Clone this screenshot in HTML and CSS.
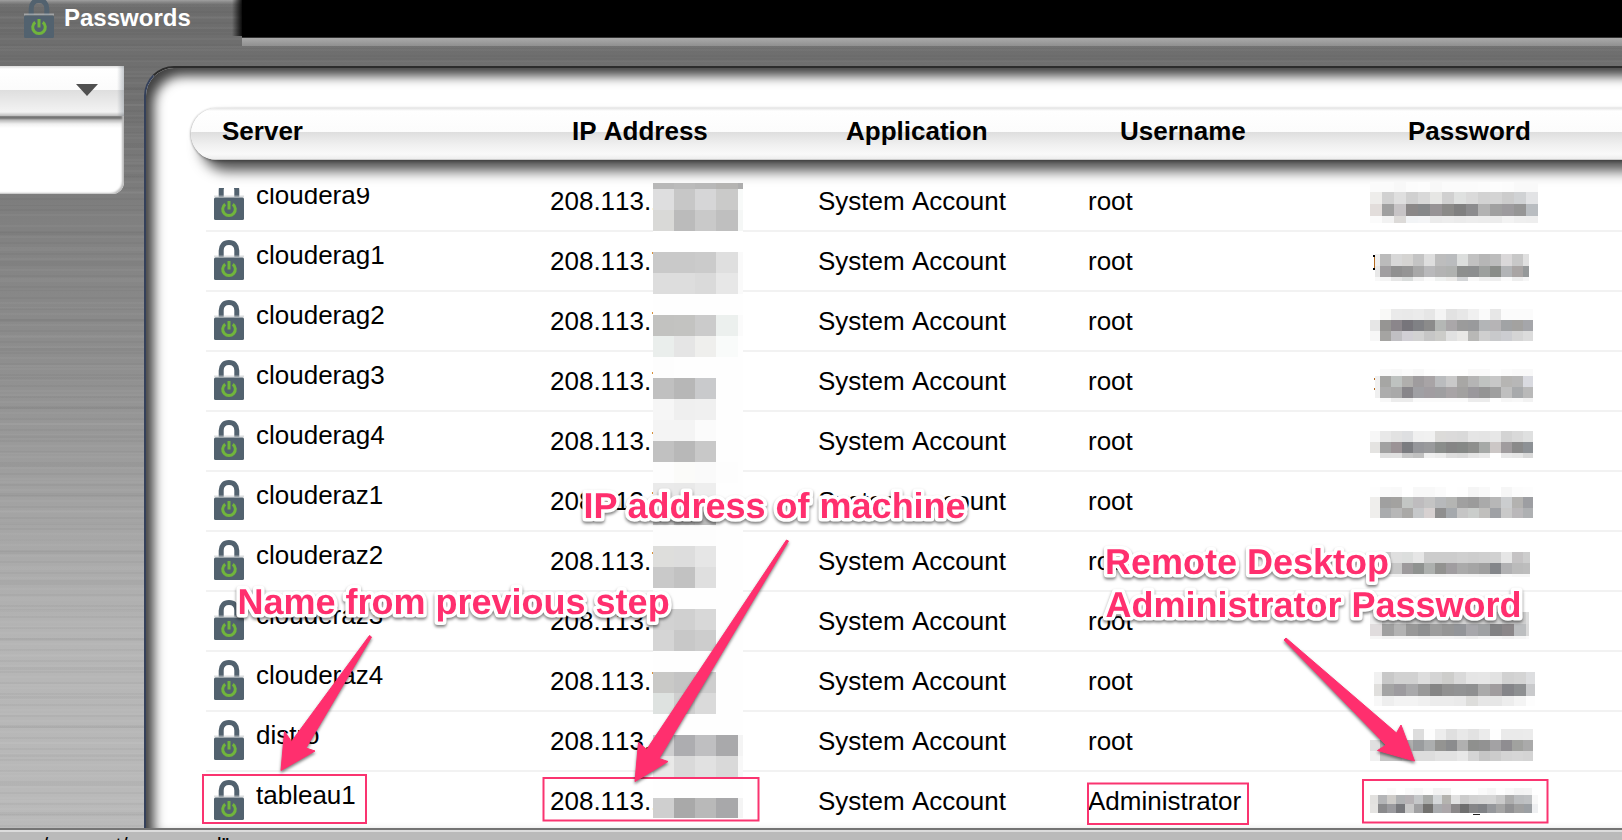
FILE: index.html
```html
<!DOCTYPE html>
<html lang="en">
<head>
<meta charset="utf-8">
<title>Passwords</title>
<link rel="stylesheet" href="styles.css">
</head>
<body>
<svg class="defs" width="0" height="0">
  <symbol id="lock" viewBox="0 0 30 40">
    <path d="M7.200 17V10.500C7.200 5.500 10 2.500 15 2.500S22.800 5.500 22.800 10.500V17" fill="none" stroke="#52626f" stroke-width="5"/>
    <rect x="0" y="15.500" width="30" height="2" fill="#c4c9cd" opacity=".6"/>
    <rect x="0" y="17.500" width="30" height="22.500" rx="1.500" fill="#52626f"/>
    <path d="M11.200 24.200A6.300 6.300 0 1 0 18.800 24.200" fill="none" stroke="#71b53c" stroke-width="3"/>
    <path d="M15 21V29.500" stroke="#71b53c" stroke-width="3"/>
  </symbol>
</svg>
<header class="topbar">
  <div class="tab"><svg class="lock"><use href="#lock"/></svg><span>Passwords</span></div>
  <div class="topfill"></div>
</header>
<main class="body">
  <aside class="side">
    <div class="select"><i class="caret"></i></div>
    <div class="sidebox"></div>
  </aside>
  <section class="panel">
    <div class="cols head">
      <span>Server</span><span>IP Address</span><span>Application</span><span>Username</span><span>Password</span>
    </div>
    <div class="rows" id="rows"></div>
  </section>
</main>
<footer class="status">/support/password”</footer>

<svg class="overlay" viewBox="0 0 1622 840" width="1622" height="840">
  <g id="mosaic" shape-rendering="crispEdges"></g>
  <g class="boxes">
    <rect x="203" y="775" width="163" height="48"/>
    <rect x="543.500" y="778" width="215" height="42.500"/>
    <rect x="1088" y="783.500" width="160" height="40.500"/>
    <rect x="1363" y="780" width="184.500" height="42.500"/>
  </g>
  <g class="arrows">
    <path d="M369.500 635.500L371.500 637L306 748L315 751L281 770.500L284.500 731.500L291.500 741.500Z"/>
    <path d="M786.500 540L788.500 541L659 758.500L668 761.500L635 781.500L638.500 742.500L646.700 749.500Z"/>
    <path d="M1284 640L1286 638L1396.500 733L1401 725L1414.500 761L1377.500 750.500L1386 745Z"/>
  </g>
  <g class="notes">
    <text x="583.500" y="518">IP address of machine</text>
    <text x="237.500" y="614">Name from previous step</text>
    <text x="1105" y="574">Remote Desktop</text>
    <text x="1105.500" y="617">Administrator Password</text>
  </g>
</svg>
<script src="app.js"></script>
</body>
</html>
```
FILE: styles.css
```css
* { box-sizing: border-box; }
body {
  margin: 0;
  width: 1622px;
  height: 840px;
  overflow: hidden;
  position: relative;
  display: flex;
  flex-direction: column;
  font: 26px/30px "Liberation Sans", Arial, sans-serif;
  font-kerning: none;
  color: #000;
  background:
    repeating-linear-gradient(rgba(0,0,0,.03) 0 2px, transparent 2px 5px, rgba(255,255,255,.03) 5px 7px, transparent 7px 11px),
    repeating-linear-gradient(rgba(0,0,0,.03) 0 3px, transparent 3px 17px, rgba(255,255,255,.03) 17px 19px, transparent 19px 29px),
    linear-gradient(#6c6c6c 0, #717171 100px, #808080 220px, #8e8e8e 360px, #a2a2a2 500px, #b5b5b5 640px, #bababa 830px);
}
.defs { position: absolute; }
.topbar { display: flex; height: 46px; flex: none; }
.tab {
  width: 242px;
  display: flex;
  overflow: hidden;
  padding-left: 24px;
  gap: 10px;
  color: #fff;
  font-weight: bold;
  font-size: 24px;
  line-height: 36px;
  background:
    linear-gradient(90deg, transparent 232px, rgba(0,0,0,.9) 242px) 0 0 / 100% 36px no-repeat,
    linear-gradient(#a0a0a0, transparent 5px);
}
.lock { width: 30px; height: 40px; flex: none; }
.tab .lock { margin-top: -2px; }
.topfill {
  flex: 1;
  background: linear-gradient(#000 0 37px, #333 37px 38px, #aaa 38px, #909090 46px);
}
.body { display: flex; flex: 1; min-height: 0; }
.side { width: 144px; padding-top: 20px; }
.select {
  width: 124px;
  height: 50px;
  display: flex;
  justify-content: flex-end;
  padding: 18px 26px 0 0;
  background:
    linear-gradient(90deg, transparent 117px, rgba(110,120,130,.4) 124px),
    linear-gradient(#ddd 0, #fff 3px, #fbfbfb 24px, #dedede 24px, #f3f3f3 46px, #bbb 50px);
}
.caret { width: 22px; height: 12px; background: #505050; clip-path: polygon(0 0, 100% 0, 50% 100%); }
.sidebox {
  width: 124px;
  height: 78px;
  border-radius: 0 0 12px 0;
  box-shadow: inset -2px -1px 2px #bbb;
  background: linear-gradient(#858585 0, #707070 2px, #b8b8b8 4px, #f0f0f0 8px, #fff 12px);
}
.panel {
  flex: 1;
  height: 762px;
  margin-top: 20px;
  margin-right: -30px;
  padding: 40px 0 0 45px;
  border-left: 2px solid #34405a;
  border-top: 2px solid #2c2c2c;
  border-radius: 30px 0 0 0;
  background: #fff;
  box-shadow: inset 8px 8px 12px rgba(0,0,0,.75);
}
.cols { display: grid; grid-template-columns: 336px 268px 270px 1fr; }
.head {
  height: 52px;
  grid-template-columns: 350px 274px 274px 288px 1fr;
  padding: 8px 0 0 31px;
  font-weight: bold;
  border-radius: 28px 0 0 28px;
  background: linear-gradient(#e4e4e4 0, #fff 3px, #fcfcfc 24px, #dedede 24px, #efefef 36px, #f9f9f9 46px, #eee 51px, #aaa 52px);
  box-shadow: 10px 11px 13px rgba(0,0,0,.68), -1px 0 2px rgba(0,0,0,.22), 1px 2px 3px rgba(0,0,0,.2);
}
.rows { margin: 28px 0 0 15px; height: 640px; overflow: hidden; display: flex; flex-direction: column; }
.row { flex: none; height: 60px; border-bottom: 2px solid #f2f2f2; padding: 7px 0 0 8px; }
.row:first-child { height: 44px; padding-top: 0; overflow: hidden; }
.row:first-child > * { margin-top: -9px; }
.row:last-child { border: 0; }
.row > span { padding-top: 7px; }
.row .name { display: flex; gap: 12px; padding-top: 1px; }
.status {
  height: 12px;
  flex: none;
  overflow: hidden;
  padding: 3px 0 0 42px;
  border-top: 2px solid #747474;
  background: linear-gradient(#dcdcdc 2px, #bababa 2px);
  font-size: 22px;
  line-height: 26px;
}
.overlay { position: absolute; left: 0; top: 0; }
.boxes rect { fill: none; stroke: #fa3470; stroke-width: 2; }
.arrows path { fill: #ff2f6e; stroke: #ff2f6e; stroke-width: 1; stroke-linejoin: round; }
.arrows { filter: drop-shadow(0 2px 1.5px rgba(0,0,0,.5)); }
.notes { filter: drop-shadow(0 2px 1.5px rgba(0,0,0,.5)); }
.notes text {
  font: bold 36px "Liberation Sans", Arial, sans-serif;
  font-kerning: none;
  text-rendering: geometricPrecision;
  fill: #ff2f6e;
  stroke: #fff;
  stroke-width: 7px;
  stroke-linejoin: round;
  paint-order: stroke;
}
```
FILE: app.js
```js
const servers = [
  ["cloudera9", "208.113.1", "root"],
  ["clouderag1", "208.113.7", "root"],
  ["clouderag2", "208.113.7", "root"],
  ["clouderag3", "208.113.7", "root"],
  ["clouderag4", "208.113.7", "root"],
  ["clouderaz1", "208.113.7", "root"],
  ["clouderaz2", "208.113.7", "root"],
  ["clouderaz3", "208.113.7", "root"],
  ["clouderaz4", "208.113.7", "root"],
  ["distro", "208.113.1", "root"],
  ["tableau1", "208.113.1", "Administrator"]
];
document.getElementById("rows").innerHTML = servers.map(([name, ip, user]) =>
  `<div class="cols row"><div class="name"><svg class="lock"><use href="#lock"/></svg><span>${name}</span></div>` +
  `<span>${ip}</span><span>System Account</span><span>${user}</span></div>`).join("");

// Each block hides part of a value: column edges, then bands of [top, bottom, shades].
const out = [];
const shade = s => "#" + (s.length === 2 ? s + s + s : s);
function band(edges, top, bottom, shades) {
  shades.split(" ").forEach((s, i) => {
    if (s === "-" || edges[i + 1] === undefined) return;
    out.push(`<rect x="${edges[i]}" y="${top}" width="${edges[i + 1] - edges[i]}" height="${bottom - top}" fill="${shade(s)}"/>`);
  });
}

const ipEdges = [653, 674, 695, 716, 738, 743];
band(ipEdges, 183, 189, "b8 bb b8 b5b4b2 ad");
[
  "dededf c7 d6d6d7 cacac9 f8faf9", "d9d9d7 bb c9 bf f5f7f6", "ff ff ff ff ff",
  "c9 c9 cb df fa", "dd dd da e7 fa", "fe fe fe fe fe", "c2c2c0 c3c3c1 cb ecf0ee fb",
  "eaeeec e5 efefed f9fbfa fe", "fd fe fe fe fe", "c0 b7 c9cacc fe fe", "f6 ef f0 fe fe",
  "f4 f4 fb fe fe", "c1 b8 c8 fe fe", "fd fbfbf9 fa fd fe", "ea e9 ee fe fe",
  "c8 b5 bd fe fe", "fd fd fd fe fe", "dededc dd e6 fe fe", "c9 c2 df fe fe",
  "fe fe fe fe fe", "d2 d0 d8 fe fe", "d5 c8 cd fe fe", "fe fe fe fe fe",
  "c9c9c7 c4 ce fe fe", "dee2e0 cf da fe fe", "fe fe fe fe fe",
  "cfcfd0 adadb0 bfbfc1 a9a9ab f4", "e9e9e8 d9 e1 d9 f8", "fe fe fe fe fe", "cf a9 b9 a8a8aa f4"
].forEach((s, i) => band(ipEdges, 189 + i * 21, i === 29 ? 818 : 210 + i * 21, s));

function edges(start, first, step, end, tail) {
  const e = [start];
  for (let x = first; x < end - 2; x += step) e.push(Math.round(x));
  e.push(end);
  if (tail) e.push(tail);
  return e;
}
const blocks = [
  [edges(1370, 1382, 12, 1538), [
    [182, 192, "fb fb f8 fc fd f8 fb fb fb fc fd fc f9 f9"],
    [192, 204, "eeedeb d1 df d0 d9 e6e6e4 d0 dfe1e0 da d2 d4 cc d0d2d4 e2e3e5"],
    [204, 216, "e2dddb a0 c7c4c6 8b8888 86888a 979395 8b8a88 80 8c8c8e b2 a0 9d9b9e 96 b9bdc1"],
    [216, 223, "fb f2 dcdad8 f2f4f6 f4f5f7 eb ed eb ed ec ec f3 ef ee"]]],
  [edges(1375, 1380, 11, 1529), [
    [254, 266, "ef bb d8 d5d4d2 c4 de bd babcbe dcdedd c1 b6 bd dad8d9 c8 e0"],
    [266, 277, "e8 a09ea0 90 95 a8 b9b9bb b3 b0b2b0 8d8f8e 8c8e8f 9da09e 8a8d89 b2b4b6 a9a5a4 96999a"],
    [277, 281, "f8 f4 e6 dadddc f1 fb eff1f0 ecebe9 d3d5d7 f8 ef ee fb ee f6"]]],
  [edges(1370, 1380, 11, 1533), [
    [309, 320, "- f9f9f7 ea e9 eb e6 f4 e2 e7 f0 fa e7 fb fb fb"],
    [320, 331, "e6 969593 8b868b 77757b 808185 8b b4b7b5 aaa7a9 9b 999a9c b3b5b7 b6b4b6 a1a3a5 a3a2a0 a5a6aa"],
    [331, 341, "f7 a5a4a2 c0bfc3 d1cfd5 d2 c6 ccccc9 e1 e9e8e6 b8b8b6 cf c8c9cb cccdd1 d5 dc"]]],
  [edges(1375, 1380, 11, 1533), [
    [369, 376, "- fa f8 fb f8 fd fe fe fe f9 f9 fe fb f9 f9"],
    [376, 387, "f0 a6a6a4 bec2c0 b0afad 9f9c9e a8a4a6 babcbe c9 a8a7a5 b5 c0c3c1 c7 b6b5b3 b7 d9dae0"],
    [387, 398, "f0 ad a9 88868a a0a0a4 a19da1 9f9fa1 a8a4a6 a2a1a0 9a989c 94 9f bf a8aaac b9"],
    [398, 402, "- f8 ec ec fa fa fa fa fa ec ec fe f6 f8 f2"]]],
  [edges(1370, 1380, 11, 1533), [
    [431, 442, "f7 e8 e2 dedfe1 f0 f1 dcdbd9 dbdada d9 e5 e4 e7 d3 d9 dfe0e0"],
    [442, 453, "e4e3e1 a1 9b9396 7b7c80 95969a 999a9c 8a8d8b 85 858886 8e8f8d a6a9a7 ccc7c6 a09c9e 8a 8d9195"],
    [453, 458, "- df e0 c7 c0 ef eb dd da e4 e9 - e8 e5 d8"]]],
  [edges(1370, 1380, 11, 1533), [
    [487, 497, "fe fa f9 ff f8 f8 fb ff fe f5 f9 ff f6 fc fd"],
    [497, 508, "efeeec a0 a3a2a0 c3c6c4 bebcbe c4 b7b9bb b4b5b3 a0 9b aa b7 cbcdcf b3b2b0 9d9ea2"],
    [508, 518, "efeeec aaacae b7 aaa9a7 c6c8ca d7d1d1 8f a5a9ad c5 cacdcb c0bfbd 9fa1a5 c9 bab8ba aeb0b2"]]],
  [edges(1370, 1380, 11, 1530), [
    [552, 563, "- cc df dcdedd e6 cc cc cc cf cd cf d1 e6 c5c3c4 cd"],
    [563, 574, "e8 c0 c8 9d9a9c 8f9290 adb0ae 929290 a09da0 aa a5 9f 84868a b1b1b3 bb bd"],
    [574, 577, "- f2 f0 f2 f4 f2 f2 f4 f2 f2 f0 f2 fa f6 f6"]]],
  [edges(1370, 1382, 12, 1529), [
    [612, 624, "f0 d0 d5 cc d0 cc d0 d3 cc cd d5 cc d0 dd"],
    [624, 636, "e0dcdd a0 b3 98 8f9091 9d 96 939599 a7a7ab 9fa1a3 828284 8b8789 bcbec0 da"],
    [636, 639, "f6 f2 f4 f4 f0 f2 f4 f2 ee f4 f6 f2 f6 fa"]]],
  [edges(1374, 1382, 12, 1535), [
    [672, 684, "f1 c8 d1 d1 dd d4 cdcdcb d9 e5 e6 e2 d1 d4 dddee0"],
    [684, 696, "e0dfdd a4 9d9b9f a9a9ab 99 85 919191 929394 8f9091 aa a09c9e 858589 8e9092 c9cacc"],
    [696, 706, "f8 ee f3 f3 f0 ec ec ea dddddb e6 e6 ed f4 fd"]]],
  [edges(1370, 1380, 11, 1533), [
    [729, 740, "- - - - dd fd ed df e8 e2 eb fe ea ea eb"],
    [740, 751, "e0 b0 a0 b0 9a9c9e acaeaf 949492 8b8c8e b0 8f908e 92 a3a2a4 8f8d91 a1a29f aa"],
    [751, 761, "f0 c5 c5 d0 dd dd e2 e2 e8 d5 c6 cc d4 d6 d4"]]],
  [edges(1370, 1378, 9.1, 1532, 1538), [
    [788, 795, "- - fb - fa f7 fc f3 f4 - - - fa f6 fd f8 f3 f4"],
    [795, 804, "e2e1df b4b5b7 ceccc9 b0b2b4 b6b2b5 c5c7c9 a9aba9 d5d8da b4b3af e2 cc d3 d5 d6 ca ad bcbec0 bfc1c3 f8"],
    [804, 813, "e4e3e1 8a8a8c 9a9a9e 77787c c8 a0a0a2 72716f a9abae aca7aa 8b8889 6f6f6f 868688 808286 95979b a5 919193 a0 9b9fa3 eeeff1"]]]
];
blocks.forEach(([e, bands]) => bands.forEach(b => band(e, ...b)));
// Slivers of characters left visible beside the hidden values.
out.push('<path d="M1374 255v14M1374 378v2M1374 388v2" stroke="#b46a20" stroke-width="1"/>');
out.push('<path d="M1373 256h2M1373 269h2" stroke="#000" stroke-width="2"/>');
out.push('<path d="M1473 814h7" stroke="#222" stroke-width="1"/>');
document.getElementById("mosaic").innerHTML = out.join("");
```
